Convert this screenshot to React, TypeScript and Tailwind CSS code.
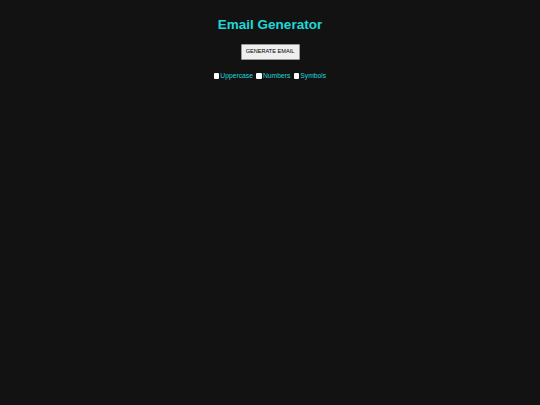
import React from "react";

function Check({ label }: { label: string }) {
  return (
    <label className="flex items-center">
      <input
        type="checkbox"
        className="appearance-none w-[5.5px] h-[5.5px] bg-white rounded-[1px] m-0 mr-[1px] shrink-0"
      />
      <span>{label}</span>
    </label>
  );
}

export default function App() {
  return (
    <div className="min-h-screen bg-[#121212] font-['Liberation_Sans',Arial,sans-serif] flex flex-col items-center pt-[16.5px]">
      <h1 className="text-[13.5px] font-bold leading-[15.5px] text-[#1ed8d8]">
        Email Generator
      </h1>
      <button className="mt-[11.7px] w-[59px] h-[16.6px] bg-[#efefef] border-[0.6px] border-[#9a9a9a] rounded-[1px] text-[5.6px] leading-none text-black">
        GENERATE EMAIL
      </button>
      <div className="mt-[12px] flex items-center gap-[3.5px] text-[6.75px] leading-[7.8px] text-[#1ed8d8]">
        <Check label="Uppercase" />
        <Check label="Numbers" />
        <Check label="Symbols" />
      </div>
    </div>
  );
}
